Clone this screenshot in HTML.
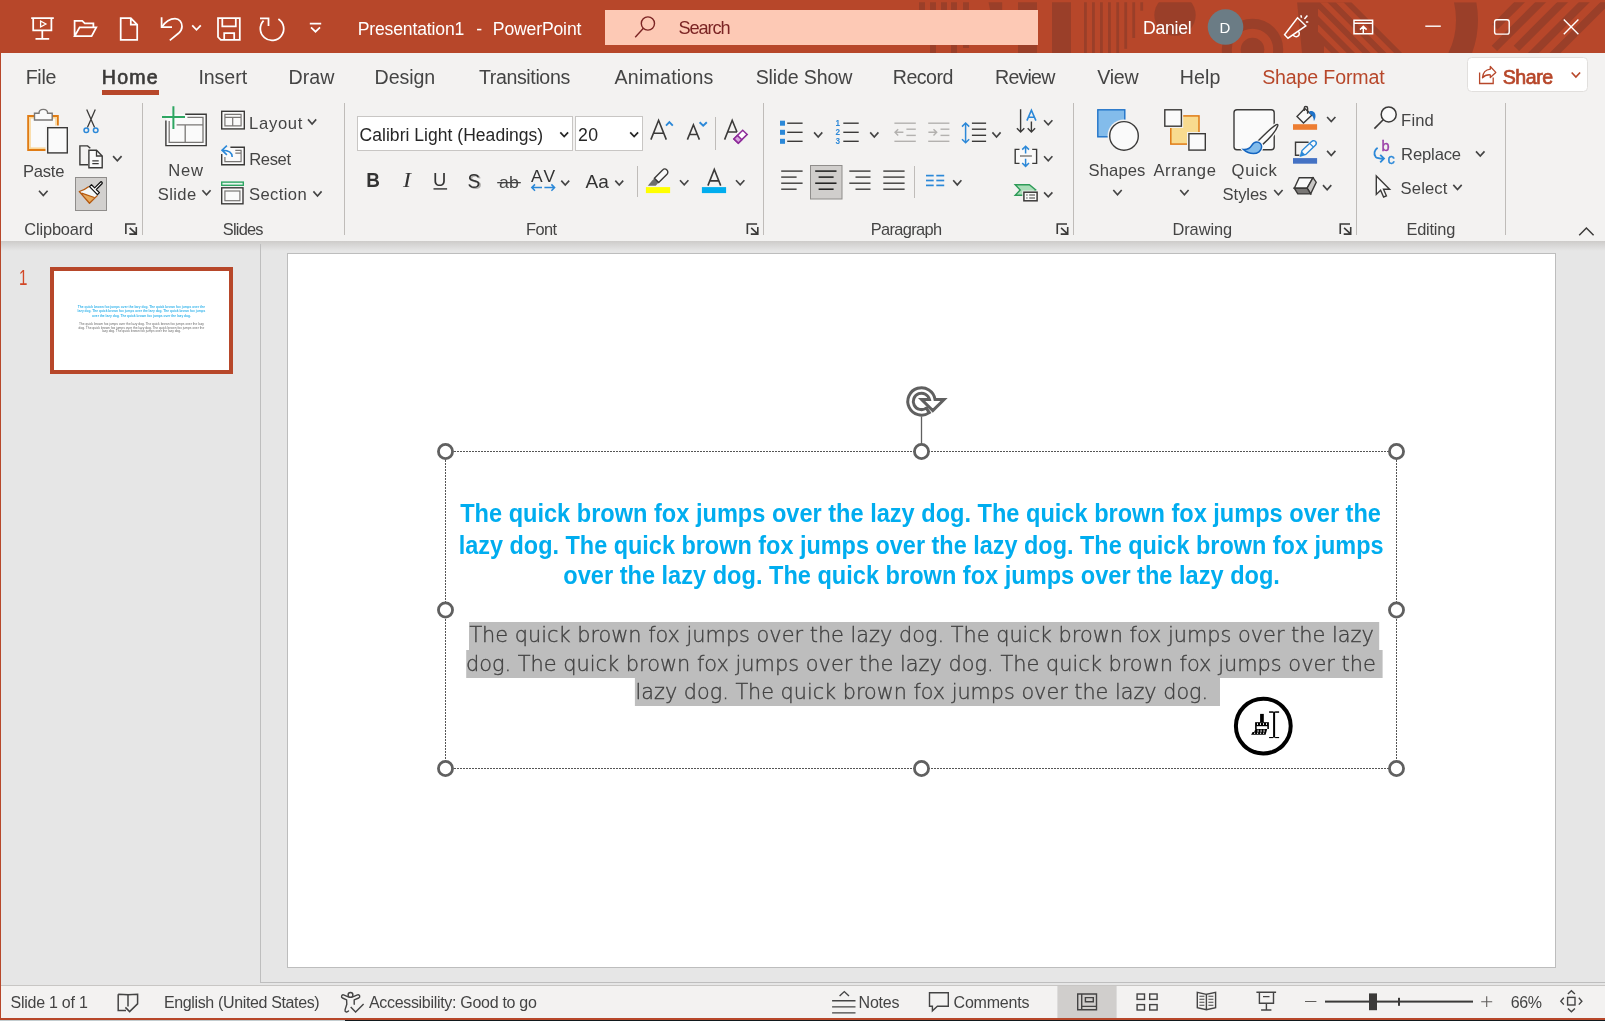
<!DOCTYPE html>
<html lang="en"><head><meta charset="utf-8"><title>Presentation1 - PowerPoint</title>
<style>
html,body{margin:0;padding:0;background:#E6E6E6;overflow:hidden}
body{width:1605px;height:1021px;position:relative;font-family:'Liberation Sans', sans-serif;}
#app{position:absolute;left:0;top:0;width:1605px;height:1021px;overflow:hidden;background:#E6E6E6}
.sec{position:absolute;left:0;width:1605px;overflow:hidden}
.sec>svg{position:absolute;left:0;top:0;display:block;will-change:transform}
svg text{font-family:'Liberation Sans', sans-serif;white-space:pre}
#titlebar{top:0;height:53px;background:#B7472A}
#tabs{top:53px;height:47px;background:#F3F2F1}
#ribbon{top:100px;height:141px;background:#F3F2F1}
#work{top:241px;height:745px;background:#E6E6E6}
#status{top:985px;height:33px;background:#F3F2F1;border-top:1px solid #C8C6C4;box-sizing:border-box}
#edgeL{position:absolute;left:0;top:0;width:1px;height:1020px;background:#B7472A}
#edgeB{position:absolute;left:0;top:1018px;width:1605px;height:2px;background:#B7472A}
#desk1{position:absolute;left:0;top:1020px;width:345px;height:1px;background:#C3CDD0}
#desk2{position:absolute;left:345px;top:1020px;width:1260px;height:1px;background:#10191D}
</style></head><body>
<div id="app">
<div class="sec" id="titlebar"><svg width="1605" height="53" viewBox="0 0 1605 53"><defs><clipPath id="tc"><rect x="0" y="2.2" width="1605" height="51"/></clipPath><clipPath id="tc2"><rect x="1318" y="2.2" width="100" height="51"/></clipPath><clipPath id="tc3"><rect x="1324" y="2.2" width="100" height="51"/></clipPath><clipPath id="tc4"><rect x="1420" y="2.2" width="100" height="51"/></clipPath></defs><g clip-path="url(#tc)"><g fill="#9A3F29"><rect x="919" y="2" width="6" height="18"/><rect x="930" y="2" width="6" height="51"/><rect x="941" y="2" width="6" height="18"/><rect x="951" y="2" width="6" height="51"/><rect x="963" y="2" width="6" height="46"/><rect x="1018" y="2" width="19" height="51"/><rect x="1052" y="2" width="19" height="51"/><path d="M988.5 2H1002.2V12H990.5Z"/><rect x="1084" y="2" width="2.8" height="51"/><rect x="1092" y="2" width="2.8" height="51"/><rect x="1100" y="2" width="2.8" height="51"/><rect x="1108" y="2" width="2.8" height="51"/><rect x="1116.3" y="2" width="2.8" height="51"/><rect x="1124.3" y="2" width="2.8" height="46.8"/><rect x="1132.3" y="2" width="2.8" height="36"/><rect x="1140.3" y="2" width="2.8" height="8.7"/><circle cx="1175" cy="15.1" r="20.7"/><circle cx="1252.5" cy="49.5" r="11.8"/><path d="M1297.1 2.2H1351.3L1402.1 53H1302Z"/></g><circle cx="1252.5" cy="49.5" r="25.7" fill="none" stroke="#9A3F29" stroke-width="10"/><circle cx="1383" cy="20" r="84" fill="none" stroke="#9A3F29" stroke-width="22" clip-path="url(#tc4)"/><path d="M1327.3 -10L1407.3 70" stroke="#B7472A" stroke-width="5.52" fill="none"/><path d="M1311.4 -10L1391.4 70" stroke="#B7472A" stroke-width="5.30" fill="none"/><path d="M1295.7 -10L1375.7 70" stroke="#B7472A" stroke-width="5.30" fill="none" clip-path="url(#tc2)"/><path d="M1280 -10L1360 70" stroke="#B7472A" stroke-width="5.30" fill="none" clip-path="url(#tc2)"/><path d="M1264.3 -10L1344.3 70" stroke="#B7472A" stroke-width="5.30" fill="none" clip-path="url(#tc3)"/><g stroke="#9A3F29" stroke-width="7.7" fill="none"><path d="M1494.8 26.9L1524.8 -3.1"/><path d="M1494.4 48.4L1544.4 -1.6"/><path d="M1516.4 48.4L1566.4 -1.6"/><path d="M1526.4 60L1591.4 -5"/><path d="M1548 60L1613 -5"/></g></g><rect x="605" y="10" width="433" height="35" fill="#FDC9B5"/><g fill="none" stroke="#FFFFFF" stroke-width="1.75" stroke-linejoin="miter"><path d="M31.2 18.2H53.8M33.2 18.2V30.4H51.4V18.2M42.3 30.4V38.8M35.5 38.9H49.2"/><path d="M40.6 21V27L45.9 24Z" stroke-width="1.3"/><path d="M74.6 36V20.8H82.3L84.8 23.4H93.4V27.3M74.6 36.2L79.6 27.3H96.3L91.6 36.2Z"/><path d="M120.7 18.2H130.8L137.2 24.6V39.8H120.7ZM130.8 18.2V24.6H137.2"/><path d="M161.6 17.2V27.2H172"/><path d="M162 26.8C165.5 21.5 170 18.5 175 18.5C179.5 18.5 182 22.5 182 26.5C182 29.5 180.5 31.5 178.5 33.3L169.8 40.4"/><path d="M192.2 25.4l4.3 4.4l4.3 -4.4"/><path d="M218 18H239.8V39.8H220.8L218 37ZM222.3 18V26.3H235.8V18M224.2 39.8V33.2H234.2V39.8"/><path d="M260 18.4H268.5V26"/><path d="M278.4 18.9A11.7 11.7 0 1 1 263.6 20.6"/><path d="M309.8 23.5H321.2M311 27.4l4.5 4.3l4.5 -4.3"/></g><g fill="none" stroke="#7B2424" stroke-width="1.4"><circle cx="647.9" cy="23.5" r="6.6"/><path d="M643.4 28.3L635.2 37.3"/></g><g fill="none" stroke="#FFFFFF" stroke-width="1.5"><path d="M1297.5 17.8L1305.8 25.8L1288 38.2L1284.6 34.8ZM1293.4 35.3A3 3 0 0 0 1298.7 31.6M1300.8 15.2L1301.6 17.8M1304.4 19L1307.4 15.6M1305.9 22H1308.3"/></g><g fill="none" stroke="#FFFFFF" stroke-width="1.5"><path d="M1354 20.3H1372.6V33.8H1354ZM1354 23.2H1372.6M1363.3 33.6V26.4M1360 29.6L1363.3 26.3L1366.6 29.6"/></g><g fill="none" stroke="#FFFFFF" stroke-width="1.4"><path d="M1425.3 26.2H1440.8"/><rect x="1494.6" y="19.7" width="14.6" height="14.4" rx="2.2"/><path d="M1563.8 19.6L1578.4 34.2M1578.4 19.6L1563.8 34.2"/></g><circle cx="1225.5" cy="27" r="17.8" fill="#6B7C85"/><text x="357.7" y="34.9" textLength="106.6" lengthAdjust="spacing" font-size="17.6" fill="#FFFFFF" >Presentation1</text><text x="476.2" y="34.9" textLength="6.6" lengthAdjust="spacing" font-size="17.6" fill="#FFFFFF" >-</text><text x="492.8" y="34.9" textLength="88.6" lengthAdjust="spacing" font-size="17.6" fill="#FFFFFF" >PowerPoint</text><text x="678.6" y="33.8" textLength="52.0" lengthAdjust="spacing" font-size="18.2" fill="#7B2424" >Search</text><text x="1142.9" y="33.7" textLength="48.8" lengthAdjust="spacing" font-size="17.6" fill="#FFFFFF" >Daniel</text><text x="1219.6" y="32.6" textLength="11.4" lengthAdjust="spacing" font-size="15" fill="#FFFFFF" >D</text></svg></div>
<div class="sec" id="tabs"><svg width="1605" height="47" viewBox="0 53 1605 47"><text x="25.7" y="84" textLength="30.7" lengthAdjust="spacing" font-size="19.6" fill="#444444" >File</text><text x="198.4" y="84" textLength="48.7" lengthAdjust="spacing" font-size="19.6" fill="#444444" >Insert</text><text x="288.6" y="84" textLength="45.8" lengthAdjust="spacing" font-size="19.6" fill="#444444" >Draw</text><text x="374.6" y="84" textLength="60.5" lengthAdjust="spacing" font-size="19.6" fill="#444444" >Design</text><text x="478.9" y="84" textLength="91.3" lengthAdjust="spacing" font-size="19.6" fill="#444444" >Transitions</text><text x="614.5" y="84" textLength="98.9" lengthAdjust="spacing" font-size="19.6" fill="#444444" >Animations</text><text x="755.7" y="84" textLength="96.7" lengthAdjust="spacing" font-size="19.6" fill="#444444" >Slide Show</text><text x="892.8" y="84" textLength="60.6" lengthAdjust="spacing" font-size="19.6" fill="#444444" >Record</text><text x="995" y="84" textLength="60.4" lengthAdjust="spacing" font-size="19.6" fill="#444444" >Review</text><text x="1097.2" y="84" textLength="41.4" lengthAdjust="spacing" font-size="19.6" fill="#444444" >View</text><text x="1179.8" y="84" textLength="40.6" lengthAdjust="spacing" font-size="19.6" fill="#444444" >Help</text><text x="101.8" y="83.8" textLength="55.9" lengthAdjust="spacing" font-size="19.6" fill="#3B3A39" stroke="#3B3A39" stroke-width="0.65">Home</text><rect x="102" y="90" width="57" height="5" fill="#B7472A"/><text x="1262.2" y="84" textLength="122.4" lengthAdjust="spacing" font-size="19.6" fill="#B7472A" >Shape Format</text><rect x="1467.5" y="57.5" width="120" height="34" rx="4" fill="#FFFFFF" stroke="#E1DFDD"/><g fill="none" stroke="#B7472A" stroke-width="1.3"><path d="M1479.6 72.4V83.5H1493.2V77.4"/><path d="M1482.5 77.7C1482.9 72.5 1485.8 69.7 1490.3 69.2V66.5L1495.8 72.4L1490.3 77.5V74.8C1486.8 74.5 1484.4 75.6 1482.5 77.7Z" stroke-linejoin="round"/></g><text x="1502.8" y="84" textLength="50.3" lengthAdjust="spacing" font-size="19.6" fill="#B7472A" stroke="#B7472A" stroke-width="0.7">Share</text><path d="M1571.7 72.5l4.2 4.6l4.2 -4.6" fill="none" stroke="#B7472A" stroke-width="1.65"/></svg></div>
<div class="sec" id="ribbon"><svg width="1605" height="141" viewBox="0 100 1605 141"><rect x="142" y="103" width="1" height="132" fill="#BFBCB9"/><rect x="344" y="103" width="1" height="132" fill="#BFBCB9"/><rect x="763" y="103" width="1" height="132" fill="#BFBCB9"/><rect x="1073" y="103" width="1" height="132" fill="#BFBCB9"/><rect x="1356" y="103" width="1" height="132" fill="#BFBCB9"/><rect x="1505" y="103" width="1" height="132" fill="#BFBCB9"/><rect x="28.2" y="116" width="29.6" height="34" fill="#FAFAFA" stroke="#E07C14" stroke-width="2"/><rect x="30" y="117.8" width="26" height="30.4" fill="none" stroke="#FAD79A" stroke-width="1.6"/><path d="M34.5 120V113.2H39C39 110.6 41 109.4 43.3 109.4C45.6 109.4 47.6 110.6 47.6 113.2H52.2V120Z" fill="#FAFAFA" stroke="#797775" stroke-width="1.4" /><rect x="45.5" y="125.5" width="24" height="30" fill="#F3F2F1"/><rect x="47.7" y="127.7" width="19.6" height="25.2" fill="#FAFAFA" stroke="#3B3A39" stroke-width="1.4" /><text x="23" y="176.6" textLength="41.4" lengthAdjust="spacing" font-size="16.6" fill="#444444" >Paste</text><path d="M39 190.8l4.3 4.8l4.3 -4.8" fill="none" stroke="#444444" stroke-width="1.65"/><path d="M86.7 109.6L94.6 127.4M95.3 109.6L87.4 127.4" fill="none" stroke="#3B3A39" stroke-width="1.3" /><circle cx="86.3" cy="130.2" r="2.3" fill="none" stroke="#2B88D8" stroke-width="1.5" /><circle cx="95.7" cy="130.2" r="2.3" fill="none" stroke="#2B88D8" stroke-width="1.5" /><path d="M90.3 148.2L87.6 145.9H79.9V164.7H88" fill="none" stroke="#3B3A39" stroke-width="1.4" /><path d="M88.9 150.2H96.5L102.2 156V167.7H88.9Z" fill="#FAFAFA" stroke="#3B3A39" stroke-width="1.4" /><path d="M96.5 150.2V156H102.2M92.3 160.8H98.7M92.3 163.6H98.7" fill="none" stroke="#3B3A39" stroke-width="1.3" /><path d="M113.1 156.1l4.25 4.7l4.25 -4.7" fill="none" stroke="#444444" stroke-width="1.65"/><rect x="75.5" y="177.5" width="31" height="33" fill="#D2D0CE" stroke="#8F8D8B"/><path d="M88.9 186.5Q84.5 190 79.3 191.5L81.8 193.2L94.4 197.5L97.5 195.4Z" fill="#F4F7F7"/><path d="M82.6 193.6L89.5 203.2L94.4 197.5Z" fill="#E8A857"/><path d="M88.9 186.5Q84.5 190 79.3 191.5L89.5 203.2L97.5 195.4M81.6 193.2L94.4 197.5" fill="none" stroke="#B5590F" stroke-width="1.3" stroke-linejoin="round"/><g transform="translate(94.47 189.65) rotate(45)"><path d="M-5.6 1.4H5.6V-1.4H1.15V-9.4A1.15 1.15 0 0 0 -1.15 -9.4V-1.4H-5.6Z" fill="#FFFFFF" stroke="#111111" stroke-width="1.25" stroke-linejoin="round"/></g><text x="24.3" y="234.7" textLength="68.9" lengthAdjust="spacing" font-size="16.4" fill="#444444" >Clipboard</text><g fill="none" stroke="#3B3A39" stroke-width="1.6"><path d="M135.60 224.05H125.85V234.10"/><path d="M129.70 227.90L135.90 233.70M136.30 227.10V234.10H129.30"/></g><rect x="166" y="114.2" width="40.2" height="31.4" fill="#FAFAFA"/><path d="M185.2 114.2H206.2V145.6H165.9V120.5" fill="none" stroke="#3B3A39" stroke-width="1.4" /><path d="M187.4 117.4H203V142.4H169.2V121M176.6 124.8H203M185.2 124.8V142.4" fill="none" stroke="#797775" stroke-width="1.3" /><path d="M162 117H185M173.4 106.3V129" fill="none" stroke="#2EA662" stroke-width="2" /><text x="168.3" y="175.6" textLength="34.7" lengthAdjust="spacing" font-size="16.6" fill="#444444" >New</text><text x="157.8" y="199.6" textLength="38.4" lengthAdjust="spacing" font-size="16.6" fill="#444444" >Slide</text><path d="M202.4 190.2l4.1 4.6l4.1 -4.6" fill="none" stroke="#444444" stroke-width="1.65"/><rect x="221.7" y="111.3" width="22.6" height="17.6" fill="#FAFAFA" stroke="#3B3A39" stroke-width="1.4" /><path d="M224.9 114.4H241.1V125.9H224.9ZM224.9 117.3H241.1M232.7 117.3V125.9" fill="none" stroke="#797775" stroke-width="1.2" /><text x="249" y="128.9" textLength="53.4" lengthAdjust="spacing" font-size="16.6" fill="#444444" >Layout</text><path d="M308 119.4l4.1 4.6l4.1 -4.6" fill="none" stroke="#444444" stroke-width="1.65"/><rect x="222.5" y="148" width="21" height="17" fill="#FAFAFA"/><path d="M230.4 147.3H244.3V164.8H221.7V154" fill="none" stroke="#3B3A39" stroke-width="1.4" /><path d="M235.3 150.4H241.1V161.7H224.9V157M235.3 153.1H241.1" fill="none" stroke="#797775" stroke-width="1.2" /><path d="M226.9 145.6L222 150.2L226.9 154.9M222.4 150.2C228 150.2 232.2 151.5 232.2 157" fill="none" stroke="#2B88D8" stroke-width="1.6" /><text x="249.2" y="164.9" textLength="41.8" lengthAdjust="spacing" font-size="16.6" fill="#444444" >Reset</text><rect x="221.7" y="182.1" width="21.6" height="3.2" fill="#E9F6EE" stroke="#2EA662" stroke-width="1.4" /><rect x="221.7" y="187.8" width="21.3" height="16" fill="#FAFAFA" stroke="#3B3A39" stroke-width="1.4" /><rect x="224.9" y="191" width="15" height="9.7" fill="none" stroke="#797775" stroke-width="1.2" /><text x="249" y="200.4" textLength="57.7" lengthAdjust="spacing" font-size="16.6" fill="#444444" >Section</text><path d="M313.4 191.4l4.1 4.6l4.1 -4.6" fill="none" stroke="#444444" stroke-width="1.65"/><text x="222.8" y="234.7" textLength="40.7" lengthAdjust="spacing" font-size="16.4" fill="#444444" >Slides</text><rect x="357.5" y="116.5" width="215" height="34" fill="#FFFFFF" stroke="#C8C6C4"/><rect x="575.5" y="116.5" width="67" height="34" fill="#FFFFFF" stroke="#C8C6C4"/><text x="359.6" y="140.7" textLength="183.6" lengthAdjust="spacing" font-size="17.5" fill="#262626" >Calibri Light (Headings)</text><path d="M560.3 132.3l3.9 4.2l3.9 -4.2" fill="none" stroke="#262626" stroke-width="1.75"/><text x="578" y="140.7" textLength="20.1" lengthAdjust="spacing" font-size="17.7" fill="#262626" >20</text><path d="M630.2 132.3l3.95 4.2l3.95 -4.2" fill="none" stroke="#262626" stroke-width="1.75"/><path d="M650.9 139.6L658.6 120.3L666.3 139.6M653.7 133.3H663.5" fill="none" stroke="#3B3A39" stroke-width="1.6" /><path d="M666 125.6L669.4 122.2L672.8 125.6" fill="none" stroke="#2B88D8" stroke-width="1.9" /><path d="M687.4 139.6L693.4 124.8L699.4 139.6M689.6 134.5H697.2" fill="none" stroke="#3B3A39" stroke-width="1.6" /><path d="M699.6 122.2L703.2 125.7L706.8 122.2" fill="none" stroke="#2B88D8" stroke-width="1.9" /><rect x="715" y="117" width="1" height="33" fill="#BFBCB9"/><path d="M724.6 139.6L732.2 120.3L737 132M727.5 132H737" fill="none" stroke="#3B3A39" stroke-width="1.6" /><path d="M742.7 130.2L747.2 134.4L738.3 143.1L733.9 138.9Z" fill="#FFFFFF" stroke="#8E2C9A" stroke-width="1.5" /><path d="M737.4 135.4L741.8 139.7L738.3 143.1L733.9 138.9Z" fill="#D9A6DF" stroke="#8E2C9A" stroke-width="1.5" /><text x="366.25" y="186.5" textLength="13.65" lengthAdjust="spacingAndGlyphs" font-size="19.8" fill="#333" font-weight="bold" >B</text><text x="403.1" y="186.5" textLength="8.0" lengthAdjust="spacingAndGlyphs" font-size="20.4" fill="#333" font-style="italic" style="font-family:'Liberation Serif', serif" >I</text><text x="433.1" y="185.6" textLength="14.3" lengthAdjust="spacing" font-size="18.4" fill="#333" >U</text><rect x="433.5" y="188.2" width="13.6" height="1.4" fill="#333"/><text x="469.1" y="189.1" textLength="12.8" lengthAdjust="spacingAndGlyphs" font-size="20.6" fill="#B2B0AE" >S</text><text x="467.5" y="187.8" textLength="12.8" lengthAdjust="spacingAndGlyphs" font-size="20.6" fill="#333" >S</text><text x="499.1" y="187.6" textLength="19.7" lengthAdjust="spacingAndGlyphs" font-size="17" fill="#444" >ab</text><rect x="497.2" y="182" width="23.6" height="1.3" fill="#444"/><text x="531.0" y="181.8" textLength="24.0" lengthAdjust="spacing" font-size="17.4" fill="#333" >AV</text><path d="M531.6 187.6H542M535 184.4L531.8 187.6L535 190.8M544.4 187.6H554.6M551.4 184.4L554.6 187.6L551.4 190.8" fill="none" stroke="#2B88D8" stroke-width="1.5" /><path d="M561.3 180.6l3.95 4.5l3.95 -4.5" fill="none" stroke="#444444" stroke-width="1.65"/><text x="585.4" y="187.7" textLength="24.4" lengthAdjust="spacing" font-size="19" fill="#333" letter-spacing="1">Aa</text><path d="M615.3 180.6l3.95 4.5l3.95 -4.5" fill="none" stroke="#444444" stroke-width="1.65"/><rect x="637" y="166" width="1" height="31" fill="#BFBCB9"/><path d="M654.5 178.3L658.6 182.4L655.7 185.8H647.8L652.2 180.4Z" fill="#6E6E6E"/><path d="M654.4 178.2L662.6 170A3 3 0 0 1 667 174.2L658.7 182.5Z" fill="#FAFAFA" stroke="#3B3A39" stroke-width="1.4" /><rect x="645.9" y="187.1" width="24.2" height="6" fill="#FFFF00"/><path d="M680 180.3l4.2 4.6l4.2 -4.6" fill="none" stroke="#444444" stroke-width="1.65"/><path d="M707.9 185.6L714.3 169.4L720.7 185.6M710.3 180.9H718.3" fill="none" stroke="#3B3A39" stroke-width="1.6" /><rect x="701.9" y="187.1" width="24.2" height="6" fill="#00ADEE"/><path d="M736 180.3l4.2 4.6l4.2 -4.6" fill="none" stroke="#444444" stroke-width="1.65"/><text x="526" y="234.7" textLength="31.0" lengthAdjust="spacing" font-size="16.4" fill="#444444" >Font</text><g fill="none" stroke="#3B3A39" stroke-width="1.6"><path d="M757.10 224.05H747.35V234.10"/><path d="M751.20 227.90L757.40 233.70M757.80 227.10V234.10H750.80"/></g><rect x="780" y="120.7" width="5" height="5" fill="#2B88D8"/><path d="M787.2 123.2H802.6" fill="none" stroke="#3B3A39" stroke-width="1.4"/><rect x="780" y="129.8" width="5" height="5" fill="#2B88D8"/><path d="M787.2 132.3H802.6" fill="none" stroke="#3B3A39" stroke-width="1.4"/><rect x="780" y="138.8" width="5" height="5" fill="#2B88D8"/><path d="M787.2 141.3H802.6" fill="none" stroke="#3B3A39" stroke-width="1.4"/><path d="M814.1 132.4l4.1 4.6l4.1 -4.6" fill="none" stroke="#444444" stroke-width="1.65"/><path d="M843.3 123.2H858.7" fill="none" stroke="#3B3A39" stroke-width="1.4"/><text x="835.4" y="126.10000000000001" font-size="8.2" font-weight="bold" fill="#2B88D8">1</text><path d="M843.3 132.3H858.7" fill="none" stroke="#3B3A39" stroke-width="1.4"/><text x="835.4" y="135.20000000000002" font-size="8.2" font-weight="bold" fill="#2B88D8">2</text><path d="M843.3 141.3H858.7" fill="none" stroke="#3B3A39" stroke-width="1.4"/><text x="835.4" y="144.20000000000002" font-size="8.2" font-weight="bold" fill="#2B88D8">3</text><path d="M870.2 132.4l4.1 4.6l4.1 -4.6" fill="none" stroke="#444444" stroke-width="1.65"/><path d="M894.4 123.2H915.8" fill="none" stroke="#B3B1AF" stroke-width="1.4"/><path d="M894.4 141.3H915.8" fill="none" stroke="#B3B1AF" stroke-width="1.4"/><path d="M906.4 129.2H915.8" fill="none" stroke="#B3B1AF" stroke-width="1.4"/><path d="M906.4 135.4H915.8" fill="none" stroke="#B3B1AF" stroke-width="1.4"/><path d="M895 132.3H903.4M898.2 129.2L895 132.3L898.2 135.5" fill="none" stroke="#B3B1AF" stroke-width="1.4" /><path d="M928.2 123.2H949.4" fill="none" stroke="#B3B1AF" stroke-width="1.4"/><path d="M928.2 141.3H949.4" fill="none" stroke="#B3B1AF" stroke-width="1.4"/><path d="M940.5 129.2H949.4" fill="none" stroke="#B3B1AF" stroke-width="1.4"/><path d="M940.5 135.4H949.4" fill="none" stroke="#B3B1AF" stroke-width="1.4"/><path d="M928.4 132.3H936.7M933.5 129.2L936.7 132.3L933.5 135.5" fill="none" stroke="#B3B1AF" stroke-width="1.4" /><path d="M971.9 123.2H986.1" fill="none" stroke="#3B3A39" stroke-width="1.4"/><path d="M971.9 129.2H986.1" fill="none" stroke="#3B3A39" stroke-width="1.4"/><path d="M971.9 135.3H986.1" fill="none" stroke="#3B3A39" stroke-width="1.4"/><path d="M971.9 141.3H986.1" fill="none" stroke="#3B3A39" stroke-width="1.4"/><path d="M965.6 123V142.8M962 126.6L965.6 123L969.2 126.6M962 139.2L965.6 142.8L969.2 139.2" fill="none" stroke="#2B88D8" stroke-width="1.5" /><path d="M992.4 132.4l4.1 4.6l4.1 -4.6" fill="none" stroke="#444444" stroke-width="1.65"/><path d="M781.2 171.1H802.6" fill="none" stroke="#3B3A39" stroke-width="1.4"/><path d="M781.2 177.1H796.6" fill="none" stroke="#3B3A39" stroke-width="1.4"/><path d="M781.2 183.2H802.6" fill="none" stroke="#3B3A39" stroke-width="1.4"/><path d="M781.2 189.2H796.6" fill="none" stroke="#3B3A39" stroke-width="1.4"/><rect x="810.5" y="165.5" width="31.5" height="33.5" fill="#D0CECC" stroke="#8F8D8B"/><path d="M815.2 171.1H836.5" fill="none" stroke="#1B1B1B" stroke-width="1.5"/><path d="M818.6 177.1H833.6" fill="none" stroke="#1B1B1B" stroke-width="1.5"/><path d="M815.2 183.2H836.5" fill="none" stroke="#1B1B1B" stroke-width="1.5"/><path d="M818.6 189.2H833.6" fill="none" stroke="#1B1B1B" stroke-width="1.5"/><path d="M849.3 171.1H870.5" fill="none" stroke="#3B3A39" stroke-width="1.4"/><path d="M855.5 177.1H870.5" fill="none" stroke="#3B3A39" stroke-width="1.4"/><path d="M849.3 183.2H870.5" fill="none" stroke="#3B3A39" stroke-width="1.4"/><path d="M855.5 189.2H870.5" fill="none" stroke="#3B3A39" stroke-width="1.4"/><path d="M883.3 171.1H904.6" fill="none" stroke="#3B3A39" stroke-width="1.4"/><path d="M883.3 177.1H904.6" fill="none" stroke="#3B3A39" stroke-width="1.4"/><path d="M883.3 183.2H904.6" fill="none" stroke="#3B3A39" stroke-width="1.4"/><path d="M883.3 189.2H904.6" fill="none" stroke="#3B3A39" stroke-width="1.4"/><rect x="914" y="166" width="1" height="32" fill="#BFBCB9"/><path d="M926 175.6H933.7" fill="none" stroke="#2B88D8" stroke-width="1.7"/><path d="M936.3 175.6H944.2" fill="none" stroke="#2B88D8" stroke-width="1.7"/><path d="M926 180.5H933.7" fill="none" stroke="#2B88D8" stroke-width="1.7"/><path d="M936.3 180.5H944.2" fill="none" stroke="#2B88D8" stroke-width="1.7"/><path d="M926 185.4H933.7" fill="none" stroke="#2B88D8" stroke-width="1.7"/><path d="M936.3 185.4H944.2" fill="none" stroke="#2B88D8" stroke-width="1.7"/><path d="M953.2 180.3l4.1 4.6l4.1 -4.6" fill="none" stroke="#444444" stroke-width="1.65"/><path d="M1020.6 109.2V132M1016.9 128.3L1020.6 132L1024.3 128.3M1031.4 121.6V132M1027.7 128.3L1031.4 132L1035.1 128.3" fill="none" stroke="#3B3A39" stroke-width="1.4" /><path d="M1026.9 120.6L1031.4 110.2L1035.9 120.6M1028.4 117.2H1034.4" fill="none" stroke="#2B88D8" stroke-width="1.6" /><path d="M1044.1 120.2l4.15 4.5l4.15 -4.5" fill="none" stroke="#444444" stroke-width="1.65"/><rect x="1015" y="149.4" width="21.8" height="14" fill="#FAFAFA"/><path d="M1019.5 149.4H1015.2V163.4H1019.5M1032.2 149.4H1036.6V163.4H1032.2" fill="none" stroke="#3B3A39" stroke-width="1.4" /><path d="M1020 156H1031.9" fill="none" stroke="#797775" stroke-width="1.4"/><path d="M1025.6 153.6V146.2M1022.2 149.6L1025.6 146.2L1029 149.6M1025.6 158.8V166.4M1022.2 163L1025.6 166.4L1029 163" fill="none" stroke="#2B88D8" stroke-width="1.5" /><path d="M1044.1 156.2l4.15 4.5l4.15 -4.5" fill="none" stroke="#444444" stroke-width="1.65"/><path d="M1015.2 184.8H1029.4L1035.8 190L1029.4 195.3H1015.2L1020.2 190Z" fill="#A9DDB8" stroke="#2E9B58" stroke-width="1.4" /><rect x="1022.3" y="190.6" width="16.4" height="11.6" fill="#F3F2F1"/><rect x="1023.9" y="192.2" width="13.2" height="8.6" fill="#FAFAFA" stroke="#3B3A39" stroke-width="1.5" /><path d="M1026.2 195H1027.6M1029.2 195H1035M1026.2 198H1027.6M1029.2 198H1035" fill="none" stroke="#3B3A39" stroke-width="1.2" /><path d="M1044.1 192.4l4.15 4.5l4.15 -4.5" fill="none" stroke="#444444" stroke-width="1.65"/><text x="870.7" y="234.7" textLength="71.3" lengthAdjust="spacing" font-size="16.4" fill="#444444" >Paragraph</text><g fill="none" stroke="#3B3A39" stroke-width="1.6"><path d="M1067.00 224.05H1057.25V234.10"/><path d="M1061.10 227.90L1067.30 233.70M1067.70 227.10V234.10H1060.70"/></g><rect x="1097.8" y="109.8" width="27" height="27" fill="#83BCEB" stroke="#1E72C8" stroke-width="1.4"/><circle cx="1124" cy="135.9" r="16.4" fill="#F3F2F1"/><circle cx="1124" cy="135.9" r="14.3" fill="#FAFAFA" stroke="#3B3A39" stroke-width="1.4" /><text x="1088.5" y="175.5" textLength="56.9" lengthAdjust="spacing" font-size="16.6" fill="#444444" >Shapes</text><path d="M1113.3 190l4.2 4.7l4.2 -4.7" fill="none" stroke="#444444" stroke-width="1.65"/><rect x="1170.8" y="115.9" width="28.2" height="28.2" fill="#F8DB8F" stroke="#E07B14" stroke-width="1.5"/><rect x="1163" y="108" width="20.2" height="20" fill="#F3F2F1"/><rect x="1164.8" y="109.8" width="16.6" height="16.4" fill="#FAFAFA" stroke="#3B3A39" stroke-width="1.4" /><rect x="1187" y="132" width="20.2" height="20" fill="#F3F2F1"/><rect x="1188.9" y="133.7" width="16.4" height="16.4" fill="#FAFAFA" stroke="#3B3A39" stroke-width="1.4" /><text x="1153.4" y="175.5" textLength="62.5" lengthAdjust="spacing" font-size="16.6" fill="#444444" >Arrange</text><path d="M1180.2 190l4.2 4.7l4.2 -4.7" fill="none" stroke="#444444" stroke-width="1.65"/><rect x="1234" y="109.8" width="40.2" height="40" rx="3" fill="#FAFAFA" stroke="#3B3A39" stroke-width="1.4" /><path d="M1257.6 141.4C1264 135.4 1271 127.4 1276.4 124.6C1277.4 124.1 1278.2 124.6 1277.8 125.8C1276 131 1269 139 1261.7 145.4Z" fill="#FAFAFA" stroke="#F8F8F7" stroke-width="3.8"/><path d="M1257.6 141.4C1264 135.4 1271 127.4 1276.4 124.6C1277.4 124.1 1278.2 124.6 1277.8 125.8C1276 131 1269 139 1261.7 145.4" fill="#FAFAFA" stroke="#3B3A39" stroke-width="1.4" /><path d="M1243.4 149.4C1247 149.6 1250 148.4 1251.6 145.6C1253 143.2 1254.6 142 1256.8 142C1259.6 142 1261.8 144.2 1261.6 147C1261.4 151 1257.6 153.6 1253.4 153.6C1249.4 153.6 1246 151.8 1243.4 149.4Z" fill="#83BCEB" stroke="#F8F8F7" stroke-width="3.6"/><path d="M1243.4 149.4C1247 149.6 1250 148.4 1251.6 145.6C1253 143.2 1254.6 142 1256.8 142C1259.6 142 1261.8 144.2 1261.6 147C1261.4 151 1257.6 153.6 1253.4 153.6C1249.4 153.6 1246 151.8 1243.4 149.4Z" fill="#83BCEB" stroke="#1565C0" stroke-width="1.5"/><text x="1231.6" y="175.5" textLength="45.2" lengthAdjust="spacing" font-size="16.6" fill="#444444" >Quick</text><text x="1222.6" y="199.5" textLength="44.8" lengthAdjust="spacing" font-size="16.6" fill="#444444" >Styles</text><path d="M1274.2 190l4.2 4.7l4.2 -4.7" fill="none" stroke="#444444" stroke-width="1.65"/><path d="M1304.8 108.4L1312 115L1303.5 123L1297 116.4Z" fill="#FAFAFA" stroke="#3B3A39" stroke-width="1.4" /><path d="M1304.2 111V108.2A1.7 1.7 0 0 1 1307.6 108.2V113.8" fill="none" stroke="#3B3A39" stroke-width="1.4" /><path d="M1309.6 111.2C1313 110 1315.9 112.8 1315.5 116.4C1315.3 118.4 1314.7 119.8 1313.9 121C1313.7 117.6 1312.4 115 1309.2 113.3Z" fill="#1E72C8"/><rect x="1293" y="124.2" width="24.1" height="5.6" fill="#ED7D31"/><path d="M1327.1 117l4.15 4.6l4.15 -4.6" fill="none" stroke="#444444" stroke-width="1.65"/><path d="M1308.6 142.3H1295.5V155.3H1299.4" fill="none" stroke="#3B3A39" stroke-width="1.4" /><path d="M1300.6 156L1302 150.6L1311.6 141.6A2 2 0 0 1 1315.6 145L1305.8 154.4Z" fill="#FAFAFA" stroke="#2B88D8" stroke-width="1.4" /><path d="M1300.6 156L1301.8 151.4L1305.2 154.6Z" fill="#2B88D8"/><path d="M1309.6 143.4L1313.4 147" fill="none" stroke="#2B88D8" stroke-width="1.2" /><rect x="1293" y="158.1" width="24.1" height="5.6" fill="#4472C4"/><path d="M1327.1 150.9l4.15 4.6l4.15 -4.6" fill="none" stroke="#444444" stroke-width="1.65"/><path d="M1299.2 177.7H1313L1307.1 188.2H1294.3Z" fill="#FAFAFA" stroke="#3B3A39" stroke-width="1.4" /><path d="M1313 177.7L1316.2 182.2L1310.7 193.9L1307.1 188.2Z" fill="#C8C6C4" stroke="#3B3A39" stroke-width="1.4" /><path d="M1294.3 188.2H1307.1L1310.7 193.9H1297.8Z" fill="#797775" stroke="#3B3A39" stroke-width="1.4" /><path d="M1323 185.1l4.15 4.6l4.15 -4.6" fill="none" stroke="#444444" stroke-width="1.65"/><text x="1172.5" y="234.8" textLength="59.6" lengthAdjust="spacing" font-size="16.4" fill="#444444" >Drawing</text><g fill="none" stroke="#3B3A39" stroke-width="1.6"><path d="M1350.00 224.05H1340.25V234.10"/><path d="M1344.10 227.90L1350.30 233.70M1350.70 227.10V234.10H1343.70"/></g><circle cx="1388.7" cy="114.4" r="7.5" fill="#FAFAFA" stroke="#3B3A39" stroke-width="1.5" /><path d="M1383.2 119.8L1374.4 128.6" fill="none" stroke="#3B3A39" stroke-width="1.6" /><text x="1401.1" y="125.5" textLength="32.7" lengthAdjust="spacing" font-size="16.6" fill="#444444" >Find</text><text x="1381.4" y="151.3" font-size="14.6" fill="#9B3FA8" stroke="#9B3FA8" stroke-width="0.4">b</text><text x="1387.6" y="163.5" font-size="14.6" fill="#2B88D8" stroke="#2B88D8" stroke-width="0.4">c</text><path d="M1377.6 147.8C1374.4 150 1373.4 154 1375.6 156.8C1376.8 158.2 1379 158.6 1383.8 158.6M1380.2 154.8L1384 158.6L1380.2 162.4" fill="none" stroke="#2B88D8" stroke-width="1.8" /><text x="1401.1" y="159.8" textLength="60.0" lengthAdjust="spacing" font-size="16.6" fill="#444444" >Replace</text><path d="M1476 151.4l4.25 4.7l4.25 -4.7" fill="none" stroke="#444444" stroke-width="1.65"/><path d="M1376.3 175.9V194.4L1380.6 190.3L1383.6 197L1386.4 195.8L1383.5 189.2H1389.6Z" fill="#FAFAFA" stroke="#3B3A39" stroke-width="1.4" /><text x="1400.6" y="193.8" textLength="46.7" lengthAdjust="spacing" font-size="16.6" fill="#444444" >Select</text><path d="M1453.3 184.9l4.2 4.6l4.2 -4.6" fill="none" stroke="#444444" stroke-width="1.65"/><text x="1406.5" y="234.8" textLength="48.8" lengthAdjust="spacing" font-size="16.4" fill="#444444" >Editing</text><path d="M1579.2 235.2L1586.4 228L1593.6 235.2" fill="none" stroke="#3B3A39" stroke-width="1.5" /></svg></div>
<div class="sec" id="work"><svg width="1605" height="745" viewBox="0 241 1605 745"><defs><linearGradient id="shd" x1="0" y1="0" x2="0" y2="1"><stop offset="0" stop-color="#CDCBC9"/><stop offset="0.35" stop-color="#D6D5D4"/><stop offset="1" stop-color="#E6E6E6"/></linearGradient></defs><rect x="0" y="241" width="1605" height="10" fill="url(#shd)"/><rect x="260" y="244" width="1" height="739" fill="#BEBEBE"/><rect x="261" y="982" width="1344" height="1" fill="#BEBEBE"/><rect x="287.5" y="253.5" width="1268" height="714" fill="#FFFFFF" stroke="#BDBDBD"/><rect x="52" y="269" width="179" height="103" fill="#FFFFFF" stroke="#B7472A" stroke-width="4"/><text x="19.1" y="285.1" font-size="22.6" fill="#D24726" textLength="8.4" lengthAdjust="spacingAndGlyphs">1</text><rect x="469" y="622" width="910.2" height="28" fill="#BDBDBD"/><rect x="466.2" y="650" width="916.4" height="28" fill="#BDBDBD"/><rect x="634.9" y="678" width="585.1" height="28" fill="#BDBDBD"/><text x="460.2" y="521.9" textLength="920.8" lengthAdjust="spacingAndGlyphs" font-size="26.6" fill="#00ADEF" font-weight="bold" >The quick brown fox jumps over the lazy dog. The quick brown fox jumps over the</text><text x="458.7" y="554" textLength="924.8" lengthAdjust="spacingAndGlyphs" font-size="26.6" fill="#00ADEF" font-weight="bold" >lazy dog. The quick brown fox jumps over the lazy dog. The quick brown fox jumps</text><text x="563.3" y="583.9" textLength="716.6" lengthAdjust="spacingAndGlyphs" font-size="26.6" fill="#00ADEF" font-weight="bold" >over the lazy dog. The quick brown fox jumps over the lazy dog.</text><text x="469.4" y="641.9" textLength="904.4" lengthAdjust="spacingAndGlyphs" font-size="21.6" fill="#404040" font-weight="200" style="font-family:'DejaVu Sans Light','DejaVu Sans',sans-serif" stroke="#404040" stroke-width="0.35">The quick brown fox jumps over the lazy dog. The quick brown fox jumps over the lazy</text><text x="465.9" y="670.5" textLength="910.0" lengthAdjust="spacingAndGlyphs" font-size="21.6" fill="#404040" font-weight="200" style="font-family:'DejaVu Sans Light','DejaVu Sans',sans-serif" stroke="#404040" stroke-width="0.35">dog. The quick brown fox jumps over the lazy dog. The quick brown fox jumps over the</text><text x="635.6" y="698.9" textLength="572.6" lengthAdjust="spacingAndGlyphs" font-size="21.6" fill="#404040" font-weight="200" style="font-family:'DejaVu Sans Light','DejaVu Sans',sans-serif" stroke="#404040" stroke-width="0.35">lazy dog. The quick brown fox jumps over the lazy dog.</text><g transform="translate(54 271) scale(0.13812) translate(-288 -254)"><text x="460.2" y="521.9" textLength="920.8" lengthAdjust="spacingAndGlyphs" font-size="26.6" fill="#35B5EC" font-weight="bold" >The quick brown fox jumps over the lazy dog. The quick brown fox jumps over the</text><text x="458.7" y="554" textLength="924.8" lengthAdjust="spacingAndGlyphs" font-size="26.6" fill="#35B5EC" font-weight="bold" >lazy dog. The quick brown fox jumps over the lazy dog. The quick brown fox jumps</text><text x="563.3" y="583.9" textLength="716.6" lengthAdjust="spacingAndGlyphs" font-size="26.6" fill="#35B5EC" font-weight="bold" >over the lazy dog. The quick brown fox jumps over the lazy dog.</text><text x="469.4" y="641.9" textLength="904.4" lengthAdjust="spacingAndGlyphs" font-size="23.4" fill="#6A6A6A" >The quick brown fox jumps over the lazy dog. The quick brown fox jumps over the lazy</text><text x="465.9" y="670.5" textLength="910.0" lengthAdjust="spacingAndGlyphs" font-size="23.4" fill="#6A6A6A" >dog. The quick brown fox jumps over the lazy dog. The quick brown fox jumps over the</text><text x="635.6" y="698.9" textLength="572.6" lengthAdjust="spacingAndGlyphs" font-size="23.4" fill="#6A6A6A" >lazy dog. The quick brown fox jumps over the lazy dog.</text></g><path d="M445 451.5H1397M445 768.5H1397M445.5 451V769M1396.5 451V769" fill="none" stroke="#555555" stroke-width="1" stroke-dasharray="2 1"/><path d="M921.5 416.5V444" stroke="#606060" stroke-width="1.3"/><circle cx="445.5" cy="451.5" r="7.05" fill="#FFFFFF" stroke="#606060" stroke-width="2.8"/><circle cx="921.5" cy="451.5" r="7.05" fill="#FFFFFF" stroke="#606060" stroke-width="2.8"/><circle cx="1396.5" cy="451.5" r="7.05" fill="#FFFFFF" stroke="#606060" stroke-width="2.8"/><circle cx="445.5" cy="610" r="7.05" fill="#FFFFFF" stroke="#606060" stroke-width="2.8"/><circle cx="1396.5" cy="610" r="7.05" fill="#FFFFFF" stroke="#606060" stroke-width="2.8"/><circle cx="445.5" cy="768.5" r="7.05" fill="#FFFFFF" stroke="#606060" stroke-width="2.8"/><circle cx="921.5" cy="768.5" r="7.05" fill="#FFFFFF" stroke="#606060" stroke-width="2.8"/><circle cx="1396.5" cy="768.5" r="7.05" fill="#FFFFFF" stroke="#606060" stroke-width="2.8"/><path d="M935.08 399.60A13.7 13.7 0 1 0 929.36 412.62L926.20 408.12A8.2 8.2 0 1 1 929.50 399.60H921.6L932.8 410.6L944 399.6Z" fill="#FFFFFF" stroke="#606060" stroke-width="3" stroke-linejoin="miter"/><circle cx="1263.3" cy="726.1" r="27.4" fill="#FFFFFF" stroke="#000000" stroke-width="4"/><g fill="#000"><rect x="1273.1" y="711.6" width="2" height="26"/><rect x="1269.1" y="711.3" width="4" height="1.5"/><rect x="1275.1" y="711.3" width="4" height="1.5"/><rect x="1269.1" y="737" width="4" height="1.1"/><rect x="1275.1" y="737" width="4" height="1.1"/><rect x="1260.1" y="713.9" width="3.7" height="8.4"/><rect x="1255.1" y="722.2" width="13.8" height="4"/><rect x="1255.1" y="726" width="1.6" height="3"/><rect x="1267.3" y="726" width="1.6" height="3"/><path d="M1255.4 728.9H1267.2L1265.6 734.8H1251.1L1252.6 732H1254.2Z"/></g><g fill="#FFF"><rect x="1257.0" y="723.2" width="1" height="1.7"/><rect x="1260.0" y="723.2" width="1" height="1.7"/><rect x="1263.0" y="723.2" width="1" height="1.7"/><rect x="1266.0" y="723.2" width="1" height="1.7"/><rect x="1257.6" y="729.6" width="0.9" height="2.6"/><rect x="1260.6" y="729.6" width="0.9" height="2.6"/><rect x="1263.6" y="729.6" width="0.9" height="2.6"/><rect x="1254.2" y="732.6" width="0.9" height="1.4"/><rect x="1257.2" y="732.6" width="0.9" height="1.4"/><rect x="1260.2" y="732.6" width="0.9" height="1.4"/><rect x="1263.2" y="732.6" width="0.9" height="1.4"/></g></svg></div>
<div class="sec" id="status"><svg width="1605" height="33" viewBox="0 985 1605 33" style="top:-1px"><text x="10.5" y="1007.9" textLength="77.3" lengthAdjust="spacing" font-size="16" fill="#444444" >Slide 1 of 1</text><path d="M118.2 994.2V1010.6H126M118.2 994.2L128 994.8V1006.6M128 994.8L137.6 994.2V1003.6M125.4 1007.4L129.6 1011.6L138 1003.4" fill="none" stroke="#444444" stroke-width="1.5"/><text x="163.9" y="1007.9" textLength="155.8" lengthAdjust="spacing" font-size="16" fill="#444444" >English (United States)</text><g fill="none" stroke="#444444" stroke-width="1.4" stroke-linejoin="round" stroke-linecap="round"><circle cx="350.5" cy="994.9" r="2.4"/><path d="M348.3 996.9L343.6 994.9A1.65 1.65 0 0 0 342.5 998L346.6 999.8L346.8 1004.2L345.1 1009.6C344.5 1012 346.8 1012.7 348.5 1011.1M352.7 996.9L357.5 994.9A1.65 1.65 0 0 1 358.7 998L354.2 999.8V1004.2"/><path d="M350.7 1007L355.6 1012L363.6 1004" stroke-linecap="butt" stroke-linejoin="miter"/></g><text x="368.9" y="1007.9" textLength="167.9" lengthAdjust="spacing" font-size="16" fill="#444444" >Accessibility: Good to go</text><path d="M839.6 996L844.3 991.6L849 996M832.1 1000.8H855.5M832.1 1006.9H855.5M832.1 1012.9H855.5" fill="none" stroke="#444444" stroke-width="1.4"/><text x="858.6" y="1007.9" textLength="40.9" lengthAdjust="spacing" font-size="16" fill="#444444" >Notes</text><path d="M929.5 992.7H948.3V1006.2H937.4L932.4 1010.8V1006.2H929.5Z" fill="none" stroke="#444444" stroke-width="1.4"/><text x="953.6" y="1007.9" textLength="75.8" lengthAdjust="spacing" font-size="16" fill="#444444" >Comments</text><rect x="1057.4" y="986" width="59.2" height="32" fill="#D0CECC"/><g fill="none" stroke="#444444" stroke-width="1.4"><path d="M1077.7 994H1096.5V1009.8H1077.7ZM1081.7 994V1009.8M1081.7 1006.4H1096.5M1085.4 997.6H1093.3V1001.7H1085.4Z"/><rect x="1137.1" y="994" width="7.4" height="5.4"/><rect x="1149.7" y="994" width="7.4" height="5.4"/><rect x="1137.1" y="1004.6" width="7.4" height="5.4"/><rect x="1149.7" y="1004.6" width="7.4" height="5.4"/><path d="M1206.4 994.4L1197.3 992.4V1007.6L1206.4 1009.8L1215.6 1007.6V992.4L1206.4 994.4V1009.8" /><path d="M1199.4 996.2H1204.4M1199.4 999.2H1204.4M1199.4 1002.2H1204.4M1199.4 1005.2H1204.4M1208.4 996.2H1213.4M1208.4 999.2H1213.4M1208.4 1002.2H1213.4M1208.4 1005.2H1213.4" stroke-width="1.1"/><path d="M1256.4 992.2H1276.1M1259.4 992.2V1003.2H1273.5V992.2M1263 996.6H1269.5M1266.4 1003.2V1010M1261.1 1010H1271.4"/></g><rect x="1305" y="1001" width="11.4" height="1" fill="#605E5C"/><rect x="1325" y="1000.6" width="148" height="2" fill="#3B3A39"/><rect x="1369" y="993.4" width="8" height="16.8" fill="#3B3A39"/><rect x="1398" y="997.8" width="2" height="8" fill="#3B3A39"/><path d="M1481.2 1001.7H1492.2M1486.7 996.3V1007.1" stroke="#605E5C" stroke-width="1.1"/><text x="1510.8" y="1007.9" textLength="31.1" lengthAdjust="spacing" font-size="16" fill="#444444" >66%</text><g fill="none" stroke="#444444" stroke-width="1.4"><rect x="1567.6" y="997.4" width="7.4" height="7.6"/><path d="M1567.9 994L1571.4 990.8L1574.9 994M1567.9 1008.6L1571.4 1011.8L1574.9 1008.6M1563.8 997.8L1560.8 1001.2L1563.8 1004.6M1578.8 997.8L1581.9 1001.2L1578.8 1004.6"/></g></svg></div>
<div id="edgeL"></div><div id="edgeB"></div><div id="desk1"></div><div id="desk2"></div>
</div>
</body></html>
